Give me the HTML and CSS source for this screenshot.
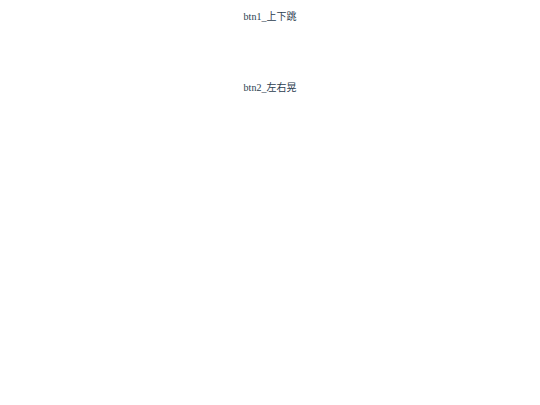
FILE: index.html
```html
<!DOCTYPE html>
<html lang="zh">
<head>
    <meta charset="UTF-8">
    <meta name="viewport" content="width=device-width, initial-scale=1.0">
    <title>动画</title>
    <link rel="stylesheet" href="styles.css">
</head>
<body>
    <div class="app">
        <div class="btn btn1">btn1_上下跳</div>
        <div class="btn btn2">btn2_左右晃</div>
    </div>
</body>
</html>
```

FILE: styles.css
```css
body {
    margin: 8px;
    font-family: 'Liberation Serif', 'Noto Sans CJK SC', serif;
    color: #2c3e50;
}

.app {
    text-align: center;
    padding-top: 1px;
}

.btn {
    font-size: 10px;
    line-height: 16px;
    height: 16px;
}

.btn1 {
    margin-bottom: 55px;
}
```
